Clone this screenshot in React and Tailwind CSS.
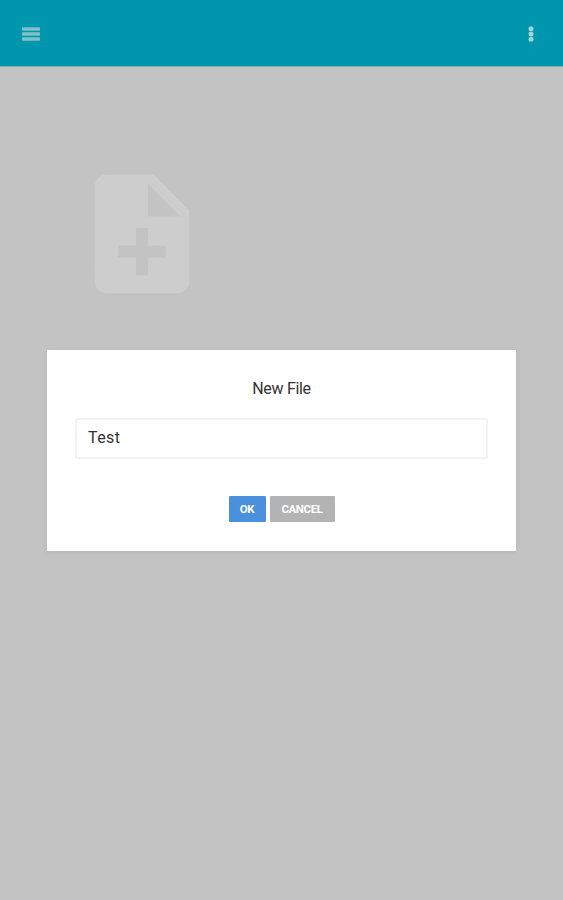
import { useState } from "react";

function MenuIcon() {
  return (
    <svg className="h-[14px] w-[18px]" viewBox="0 0 18 14" fill="currentColor">
      <rect x="0" y="0.2" width="18" height="3.6" rx="0.8" />
      <rect x="0" y="5.2" width="18" height="3.6" rx="0.8" />
      <rect x="0" y="10.2" width="18" height="3.6" rx="0.8" />
    </svg>
  );
}

function MoreIcon() {
  return (
    <svg className="h-4 w-[6px]" viewBox="0 0 6 16" fill="currentColor">
      <circle cx="3" cy="2.7" r="2.5" />
      <circle cx="3" cy="8" r="2.5" />
      <circle cx="3" cy="13.3" r="2.5" />
    </svg>
  );
}

function NewFileIcon() {
  return (
    <svg className="h-[142px] w-[142px]" viewBox="0 0 24 24" fill="currentColor">
      <path d="M14 2H6c-1.1 0-1.99.9-1.99 2L4 20c0 1.1.89 2 1.99 2H18c1.1 0 2-.9 2-2V8l-6-6zm2 14h-3v3h-2v-3H8v-2h3v-3h2v3h3v2zm-3-7V3.5L18.5 9H13z" />
    </svg>
  );
}

function NewFileDialog({ onClose }) {
  const [name, setName] = useState("Test");

  return (
    <div className="absolute inset-0 flex items-start justify-center pt-[350px]">
      <div className="flex h-[201px] w-[469px] flex-col items-center bg-white px-7 pt-7 shadow-[0_1px_5px_rgba(0,0,0,0.08)]">
        <h2 className="text-base leading-[22px] tracking-[-0.3px] text-[#333]">New File</h2>
        <input
          type="text"
          value={name}
          onChange={(e) => setName(e.target.value)}
          className="mt-[18px] h-[41px] w-full rounded-[2px] border-2 border-[#f1f2f2] px-[11px] pb-[2px] text-base tracking-[0.4px] text-[#333] outline-none"
        />
        <div className="mt-[37px] flex gap-1 text-[11.5px] font-bold tracking-[-0.4px] text-white">
          <button onClick={onClose} className="h-[26px] w-[37px] rounded-[1px] bg-[#4a90dc] pt-px">
            OK
          </button>
          <button onClick={onClose} className="h-[26px] w-[65px] rounded-[1px] bg-[#b3b3b3] pt-px">
            CANCEL
          </button>
        </div>
      </div>
    </div>
  );
}

export default function App() {
  const [open, setOpen] = useState(true);

  return (
    <div className="relative h-[900px] w-full overflow-hidden bg-[#c3c3c3] font-[Roboto,sans-serif]">
      <header className="flex h-[67px] items-center justify-between border-b border-[#7fb0b8] bg-[#0097ae] pt-px pr-[29px] pl-[22px]">
        <button className="text-[#7fc0c9]" aria-label="Menu">
          <MenuIcon />
        </button>
        <button className="text-[#a5d3d6]" aria-label="More">
          <MoreIcon />
        </button>
      </header>

      <main className="pt-24 pl-[71px]">
        <button className="block text-[#cdcdcd]" onClick={() => setOpen(true)} aria-label="New file">
          <NewFileIcon />
        </button>
      </main>

      {open && <NewFileDialog onClose={() => setOpen(false)} />}
    </div>
  );
}
